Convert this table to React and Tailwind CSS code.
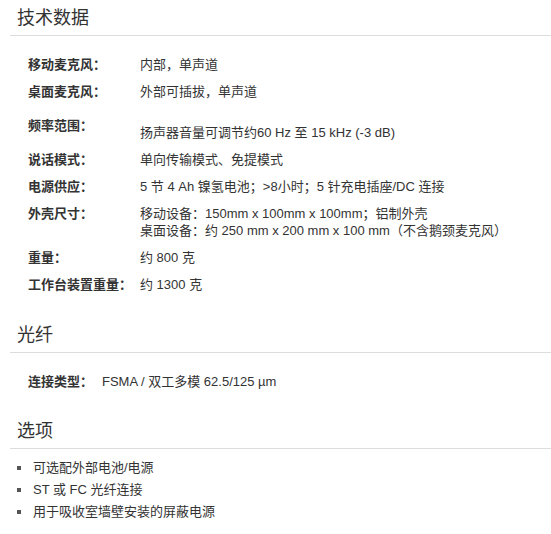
import React from 'react';

const font = { fontFamily: '"Liberation Sans", "Noto Sans CJK SC", sans-serif' };

const specs = [
    { label: '移动麦克风：', value: ['内部，单声道'] },
    { label: '桌面麦克风：', value: ['外部可插拔，单声道'] },
    { label: '频率范围：', value: ['扬声器音量可调节约60 Hz 至 15 kHz (-3 dB)'], tall: true },
    { label: '说话模式：', value: ['单向传输模式、免提模式'] },
    { label: '电源供应：', value: ['5 节 4 Ah 镍氢电池；>8小时；5 针充电插座/DC 连接'] },
    {
        label: '外壳尺寸：',
        value: [
            '移动设备：150mm x 100mm x 100mm；铝制外壳',
            '桌面设备：约 250 mm x 200 mm x 100 mm（不含鹅颈麦克风）',
        ],
    },
    { label: '重量：', value: ['约 800 克'] },
    { label: '工作台装置重量：', value: ['约 1300 克'] },
];

const options = ['可选配外部电池/电源', 'ST 或 FC 光纤连接', '用于吸收室墙壁安装的屏蔽电源'];

const Heading = ({ children }) => (
    <div className="ml-[10px] h-[36px] border-b border-[#dddddd] pl-[7px] pt-[8px]">
        <h2 className="text-[18px] leading-[20px] font-normal text-[#333333]">{children}</h2>
    </div>
);

const SpecRow = ({ label, value, tall, labelWidth }) => (
    <div className="flex text-[13px] leading-[17px] text-[#333333]">
        <div
            className={`${labelWidth} shrink-0 font-bold ${tall ? 'pt-[12px]' : 'pt-[5px]'}`}
        >
            {label}
        </div>
        <div className={`${tall ? 'pt-[19px]' : 'pt-[5px]'} pb-[5px]`}>
            {value.map((line) => (
                <div key={line}>{line}</div>
            ))}
        </div>
    </div>
);

export default function App() {
    return (
        <div className="w-[551px] min-h-[534px] bg-white" style={font}>
            <Heading>技术数据</Heading>
            <div className="pl-[28px] pt-[15px] pb-[19px]">
                {specs.map((s) => (
                    <SpecRow key={s.label} {...s} labelWidth="w-[112px]" />
                ))}
            </div>

            <Heading>光纤</Heading>
            <div className="pl-[28px] pt-[15px] pb-[18px]">
                <SpecRow label="连接类型：" value={['FSMA / 双工多模 62.5/125 µm']} labelWidth="w-[74px]" />
            </div>

            <Heading>选项</Heading>
            <ul className="pl-[17px] pt-[8px] text-[13px] leading-[22px] text-[#333333]">
                {options.map((o) => (
                    <li key={o} className="flex items-center">
                        <span className="mr-[12px] h-[4px] w-[4px] shrink-0 bg-[#555555]" />
                        {o}
                    </li>
                ))}
            </ul>
        </div>
    );
}
